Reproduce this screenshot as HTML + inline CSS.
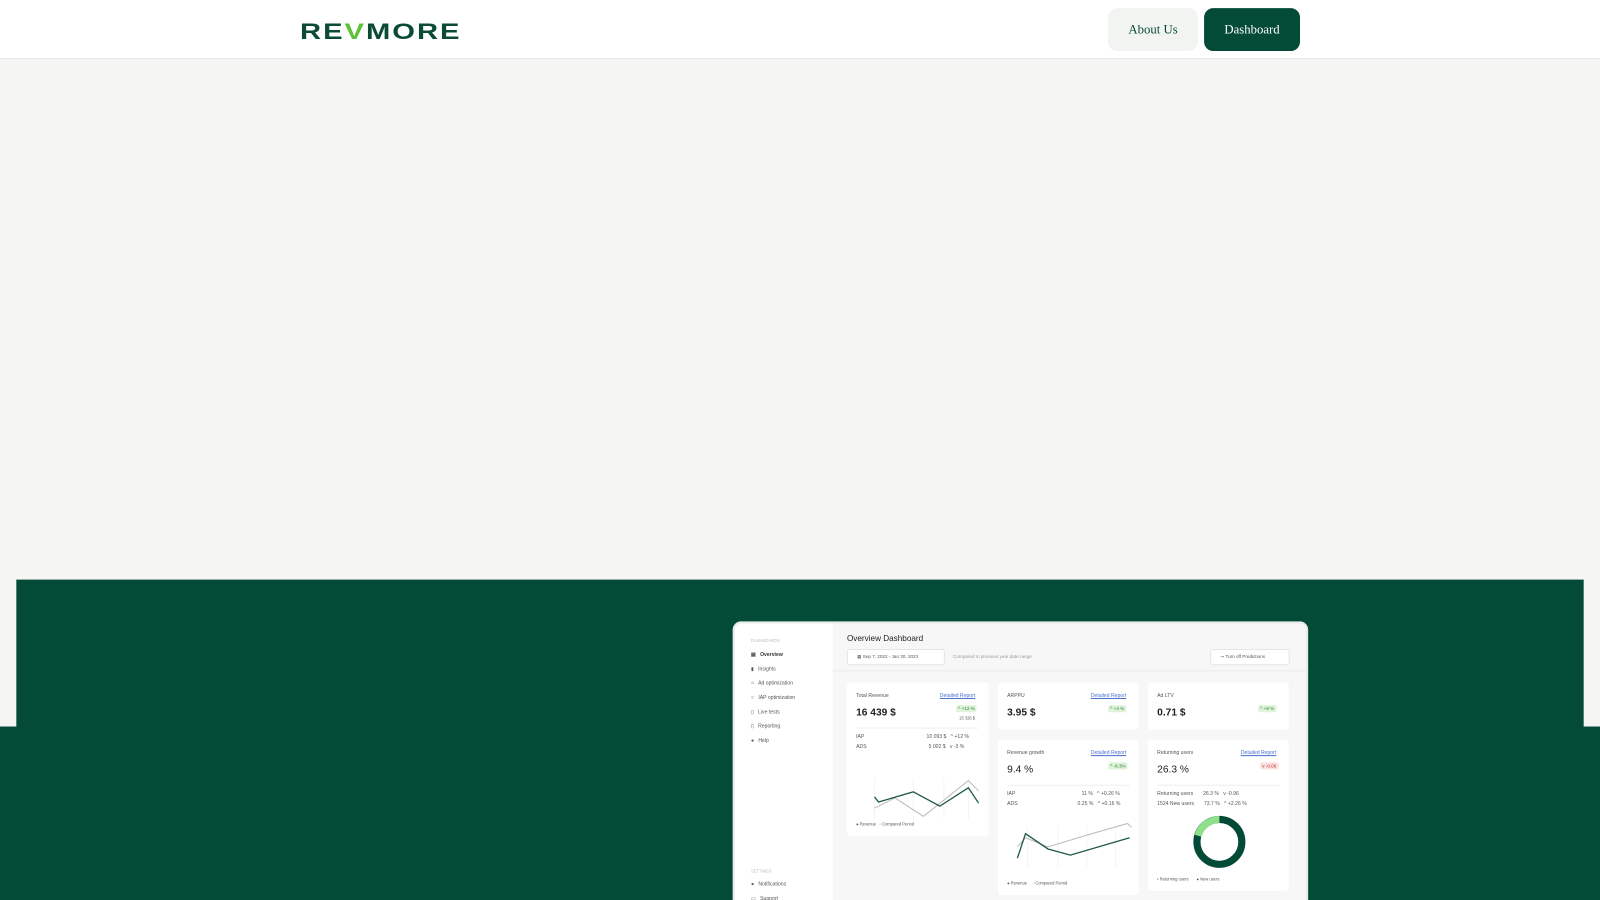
<!DOCTYPE html>
<html style="width:1600px;height:900px;overflow:hidden"><head><meta charset="utf-8"><style>
*{margin:0;padding:0;box-sizing:border-box}
body{width:1600px;height:900px;overflow:hidden;background:#f5f5f3;font-family:"Liberation Sans",sans-serif;position:relative}
.wrap{position:absolute;left:0;top:0;width:1568px;height:882px;overflow:hidden;transform:scale(1.020408);transform-origin:0 0}
.hdr{position:absolute;left:0;top:0;width:1568px;height:58px;background:#fff;border-bottom:1px solid #e6e6e6}
.logo{position:absolute;left:294px;top:18px;font-weight:bold;font-size:22px;letter-spacing:1.5px;color:#0b4a36;font-family:"Liberation Sans",sans-serif;transform:scaleX(1.3);transform-origin:left}
.btn{position:absolute;top:8px;height:42px;border-radius:9px;font-family:"Liberation Serif",serif;font-size:12.5px;line-height:42px;text-align:center}
.g1{position:absolute;left:16px;top:568px;width:1536px;height:314px;background:#034a37}
.g2{position:absolute;left:0;top:712px;width:1568px;height:170px;background:#034a37}
.pan{position:absolute;left:718px;top:609px;width:564px;height:290px;background:#f7f7f7;border-radius:8px;border:2px solid #e8ecea;overflow:hidden}
.side{position:absolute;left:0;top:0;width:96px;height:300px;background:#fff}
.t{position:absolute;font-size:5px;color:#555;white-space:nowrap}
.card{position:absolute;background:#fff;border-radius:3px}
.big{position:absolute;font-size:10px;font-weight:bold;color:#222}
.lnk{position:absolute;font-size:5px;color:#4a6fd0;text-decoration:underline}
.pill{position:absolute;font-size:4.5px;background:#dff3d9;color:#2b7a3a;padding:1px 2px;border-radius:2px}
</style></head><body>
<div class="wrap">
<div class="hdr">
<div class="logo">RE<span style="color:#5fc13a">V</span>MORE</div>
<div class="btn" style="left:1086px;width:88px;background:#f2f4f2;color:#0b4a36">About Us</div>
<div class="btn" style="left:1180px;width:94px;background:#034a37;color:#fff">Dashboard</div>
</div>
<div class="g1"></div><div class="g2"></div>
<div class="pan">
<div class="side">
<div class="t" style="left:16px;top:14px;color:#bbb;font-size:4px">DASHBOARDS</div>
<div class="t" style="left:16px;top:28px;color:#333;font-weight:bold">▤ &nbsp; Overview</div>
<div class="t" style="left:16px;top:42px">▮ &nbsp; Insights</div>
<div class="t" style="left:16px;top:56px">○ &nbsp; Ad optimization</div>
<div class="t" style="left:16px;top:70px">○ &nbsp; IAP optimization</div>
<div class="t" style="left:16px;top:84px">▯ &nbsp; Live tests</div>
<div class="t" style="left:16px;top:98px">▯ &nbsp; Reporting</div>
<div class="t" style="left:16px;top:112px">● &nbsp; Help</div>
<div class="t" style="left:16px;top:240px;color:#bbb;font-size:4px">SETTINGS</div>
<div class="t" style="left:16px;top:253px">● &nbsp; Notifications</div>
<div class="t" style="left:16px;top:267px">▭ &nbsp; Support</div>
</div>
<div class="t" style="left:110px;top:10px;font-size:8px;color:#222">Overview Dashboard</div>
<div class="card" style="left:110px;top:25px;width:96px;height:16px;border:1px solid #e5e5e5"></div>
<div class="t" style="left:120px;top:30px;font-size:4.5px">▦ Sep 7, 2022 - Jan 30, 2023</div>
<div class="t" style="left:214px;top:30px;font-size:4.5px;color:#999">Compared to previous year date range</div>
<div class="card" style="left:466px;top:25px;width:78px;height:16px;border:1px solid #e5e5e5"></div>
<div class="t" style="left:476px;top:30px;font-size:4.5px">⊸ Turn off Predictions</div>
<div style="position:absolute;left:96px;top:46px;width:470px;height:1px;background:#eaeaea"></div>
<div class="card" style="left:110px;top:58px;width:139px;height:150px">
<div class="t" style="left:9px;top:10px">Total Revenue</div><div class="lnk" style="left:91px;top:10px">Detailed Report</div>
<div class="big" style="left:9px;top:24px">16 439 $</div><div class="pill" style="left:107px;top:22px">^ +12 %</div>
<div class="t" style="left:110px;top:32px;font-size:4px">15 326 $</div>
<div style="position:absolute;left:9px;top:44px;width:120px;height:1px;background:#eee"></div>
<div class="t" style="left:9px;top:50px">IAP</div><div class="t" style="left:78px;top:50px">10 093 $ &nbsp; ^ +12 %</div>
<div class="t" style="left:9px;top:60px">ADS</div><div class="t" style="left:80px;top:60px">5 002 $ &nbsp; v -3 %</div>
<svg style="position:absolute;left:9px;top:78px" width="122" height="60"><path d="M18 16V55M56 16V55M86 16V55M110 16V55" stroke="#eee" stroke-width=".6"/><path d="M18 45L38 35L66 53L110 18L120 28" stroke="#bbb" fill="none"/><path d="M18 34L22 39L56 29L82 43L110 25L120 40" stroke="#1e5a45" stroke-width="1.3" fill="none"/></svg>
<div class="t" style="left:9px;top:136px;font-size:4px">● Revenue &nbsp; ◦ Compared Period</div>
</div>
<div class="card" style="left:258px;top:58px;width:138px;height:46px">
<div class="t" style="left:9px;top:10px">ARPPU</div><div class="lnk" style="left:91px;top:10px">Detailed Report</div>
<div class="big" style="left:9px;top:24px">3.95 $</div><div class="pill" style="left:108px;top:22px">^ +4 %</div></div>
<div class="card" style="left:405px;top:58px;width:138px;height:46px">
<div class="t" style="left:9px;top:10px">Ad LTV</div>
<div class="big" style="left:9px;top:24px">0.71 $</div><div class="pill" style="left:108px;top:22px">^ +8 %</div></div>
<div class="card" style="left:258px;top:114px;width:138px;height:152px">
<div class="t" style="left:9px;top:10px">Revenue growth</div><div class="lnk" style="left:91px;top:10px">Detailed Report</div>
<div class="big" style="left:9px;top:24px;font-weight:normal">9.4 %</div><div class="pill" style="left:108px;top:22px">^ -8.3%</div>
<div style="position:absolute;left:9px;top:44px;width:120px;height:1px;background:#eee"></div>
<div class="t" style="left:9px;top:50px">IAP</div><div class="t" style="left:82px;top:50px">11 % &nbsp; ^ +0.26 %</div>
<div class="t" style="left:9px;top:60px">ADS</div><div class="t" style="left:78px;top:60px">0.25 % &nbsp; ^ +0.16 %</div>
<svg style="position:absolute;left:9px;top:80px" width="122" height="50"><path d="M20 5V45M50 5V45M78 5V45M106 5V45" stroke="#eee" stroke-width=".6"/><path d="M10 25L18 16L40 25L76 14L118 2L122 6" stroke="#bbb" fill="none"/><path d="M10 36L18 12L40 27L62 33L120 16" stroke="#1e5a45" stroke-width="1.3" fill="none"/></svg>
<div class="t" style="left:9px;top:138px;font-size:4px">● Revenue &nbsp; &nbsp; ◦ Compared Period</div>
</div>
<div class="card" style="left:405px;top:114px;width:138px;height:148px">
<div class="t" style="left:9px;top:10px">Returning users</div><div class="lnk" style="left:91px;top:10px">Detailed Report</div>
<div class="big" style="left:9px;top:24px;font-weight:normal">26.3 %</div><div class="pill" style="left:110px;top:22px;background:#fbe0e0;color:#c33">v -0.06</div>
<div style="position:absolute;left:9px;top:44px;width:120px;height:1px;background:#eee"></div>
<div class="t" style="left:9px;top:50px">Returning users &nbsp; &nbsp; &nbsp; 26.3 % &nbsp; v -0.96</div>
<div class="t" style="left:9px;top:60px">1524 New users &nbsp; &nbsp; &nbsp; 73.7 % &nbsp; ^ +2.26 %</div>
<svg style="position:absolute;left:42px;top:72px" width="56" height="56"><circle cx="28" cy="28" r="22" stroke="#034a37" stroke-width="7" fill="none"/><path d="M28 6A22 22 0 0 0 7 22" stroke="#8ee08a" stroke-width="7" fill="none"/></svg>
<div class="t" style="left:9px;top:134px;font-size:4px">▪ Returning users &nbsp; &nbsp; &nbsp; ● New users</div>
</div>
</div>
</div>
</body></html>
